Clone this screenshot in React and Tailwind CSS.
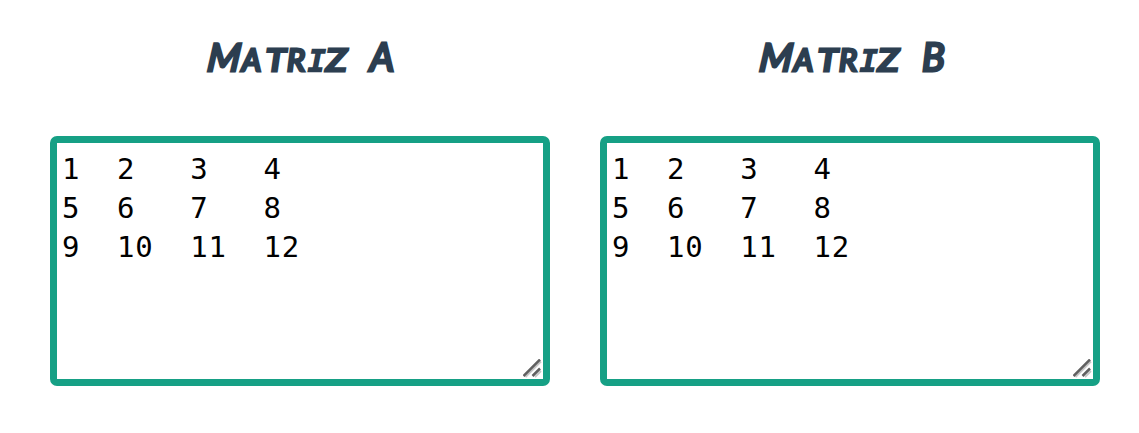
const ROWS = [
  [1, 2, 3, 4],
  [5, 6, 7, 8],
  [9, 10, 11, 12],
];

function Title({ letter, className }) {
  return (
    <h2
      className={`flex h-[60px] items-baseline whitespace-pre font-['Lato'] text-[31px] leading-[58px] font-normal italic text-[#2c3e50] [-webkit-text-stroke:3px_#2c3e50] ${className}`}
    >
      <span className="w-[37px] origin-bottom-left -skew-x-6 text-[38px]">M</span>
      <span className="w-[24px] text-[30px]">A</span>
      <span className="w-[21px] origin-left scale-x-115">T</span>
      <span className="w-[21px]">R</span>
      <span className="w-[18px] font-['DejaVu_Sans_Mono'] text-[29px] [-webkit-text-stroke:2.6px_#2c3e50]">I</span>
      <span className="w-[25px] origin-left scale-x-120">Z</span>
      <span className="w-[19px]"> </span>
      <span className="text-[38px]">{letter}</span>
    </h2>
  );
}

function ResizeGrip() {
  return (
    <svg
      className="absolute right-px bottom-px h-[19px] w-[19px]"
      viewBox="0 0 19 19"
      fill="none"
    >
      <path d="M2.5 18 18 2.5M12 18 18 12" stroke="#c8c8c8" strokeWidth="1.8" />
      <path d="M0.5 17 17 0.5M9.5 17 17 9.5" stroke="#606060" strokeWidth="2.5" />
    </svg>
  );
}

function Matrix({ letter, titleClass }) {
  return (
    <section className="w-[500px]">
      <Title letter={letter} className={titleClass} />
      <div className="relative mt-[49px] h-[250px] rounded-[7px] border-[7px] border-[#16a085] bg-white px-[5px] pt-[7px]">
        <pre className="font-['DejaVu_Sans_Mono',monospace] text-[29px] leading-[39px] tracking-[0.86px] text-black">
          {ROWS.map(
            (row) =>
              `${String(row[0]).padEnd(3)}${row
                .slice(1)
                .map((n) => String(n).padEnd(4))
                .join("")
                .trimEnd()}`
          ).join("\n")}
        </pre>
        <ResizeGrip />
      </div>
    </section>
  );
}

export default function App() {
  return (
    <main className="flex h-[433px] w-[1139px] gap-[50px] overflow-hidden bg-white pt-[27px] pl-[50px]">
      <Matrix letter="A" titleClass="pl-[155px]" />
      <Matrix letter="B" titleClass="pl-[157px]" />
    </main>
  );
}
